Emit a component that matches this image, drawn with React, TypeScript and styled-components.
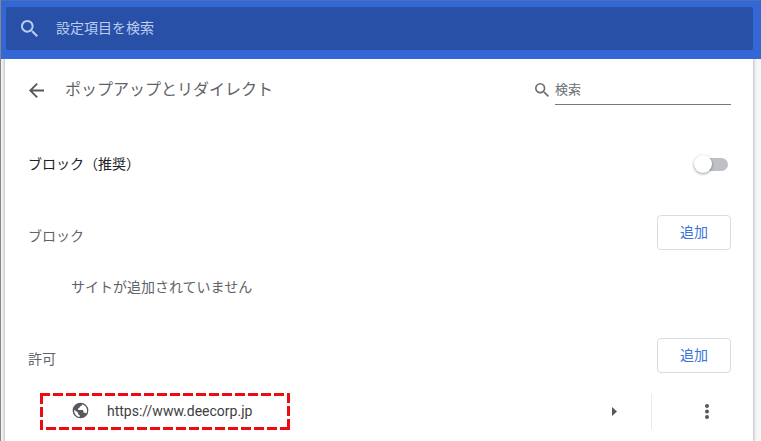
import React from "react";
import styled, { createGlobalStyle } from "styled-components";

const GlobalStyle = createGlobalStyle`
  * { box-sizing: border-box; }
  body {
    margin: 0;
    background: #f6f7f8;
    color: #333639;
    font-family: Roboto, "Noto Sans CJK JP", sans-serif;
    font-size: 14px;
    line-height: 20px;
  }
  button, input { font: inherit; }
`;

const Page = styled.div`
  min-height: 100vh;
  display: flex;
  flex-direction: column;
  border-left: 1px solid #85878b;
  overflow: hidden;
`;

const Header = styled.header`
  padding: 6px 8px 9px 5px;
  background: #3367d6;
  border-top: 1px solid #4a6fb8;
`;

const HeaderSearch = styled.label`
  display: flex;
  align-items: center;
  gap: 18px;
  height: 43px;
  padding: 0 15px;
  border-radius: 2px;
  background: #2850a7;
  color: #bccdf0;
`;

const HeaderInput = styled.input`
  flex: 1;
  min-width: 0;
  padding: 0 0 1px;
  border: 0;
  outline: 0;
  background: transparent;
  color: #fff;
  &::placeholder { color: #bccdf0; opacity: 1; }
`;

const Card = styled.main`
  flex: 1;
  margin: 0 8px 0 4px;
  padding: 0 22px 0 23px;
  background: #fff;
  box-shadow: 0 0 3px 1px rgba(60, 64, 67, 0.32);
  clip-path: inset(0 -8px 0 -4px);
`;

const TitleRow = styled.div`
  display: flex;
  align-items: center;
  height: 62px;
`;

const IconButton = styled.button`
  display: flex;
  align-items: center;
  justify-content: center;
  padding: 0;
  border: 0;
  background: transparent;
  color: #55585c;
  cursor: pointer;
`;

const BackButton = styled(IconButton)`
  width: 17px;
  height: 24px;
`;

const Title = styled.h1`
  flex: 1;
  margin: 0 0 0 20px;
  color: #5f6368;
  font-size: 16px;
  line-height: 24px;
  font-weight: 400;
`;

const SiteSearch = styled.label`
  display: flex;
  align-items: center;
  gap: 6px;
  color: #6b6e72;
`;

const SiteInput = styled.input`
  width: 176px;
  height: 29px;
  padding: 0 0 1px;
  border: 0;
  border-bottom: 1px solid #77797d;
  border-radius: 0;
  outline: 0;
  background: transparent;
  font-size: 13px;
  &::placeholder { color: #6b6e72; opacity: 1; }
`;

const ToggleRow = styled.label`
  display: flex;
  align-items: center;
  justify-content: space-between;
  height: 86px;
  padding-right: 3px;
  color: #202124;
`;

const Toggle = styled.input`
  appearance: none;
  display: flex;
  align-items: center;
  width: 32px;
  height: 13px;
  margin: 0;
  border-radius: 7px;
  background: #bdc1c6;
  &::before {
    content: "";
    width: 18px;
    height: 18px;
    margin-left: -2px;
    border-radius: 50%;
    background: #fff;
    box-shadow: 0 1px 3px rgba(0, 0, 0, 0.4);
  }
  &:checked { justify-content: flex-end; background: #8ab4f8; }
`;

const Section = styled.section`
  padding-top: 8px;
`;

const SectionHeader = styled.div`
  display: flex;
  align-items: center;
  justify-content: space-between;
`;

const SectionTitle = styled.h2`
  margin: 0;
  padding-top: 6px;
  color: #5f6368;
  font-size: 14px;
  font-weight: 400;
`;

const AddButton = styled.button`
  width: 74px;
  height: 35px;
  padding: 0 0 2px;
  border: 1px solid #dadce0;
  border-radius: 4px;
  background: #fff;
  color: #3a71dc;
  cursor: pointer;
`;

const EmptyNote = styled.p`
  margin: 0;
  padding: 27px 43px 33px;
  color: #5f6368;
`;

const SiteRow = styled.div`
  display: flex;
  align-items: center;
  margin: 20px 0 0 12px;
  height: 37px;
`;

const SiteLink = styled.a`
  position: relative;
  display: flex;
  align-items: center;
  gap: 18px;
  width: 250px;
  height: 37px;
  padding: 0 0 2px 32px;
  color: #3c4043;
  text-decoration: none;
`;

const Highlight = styled.svg`
  position: absolute;
  inset: 0;
  width: 100%;
  height: 100%;
`;

const DetailsButton = styled(IconButton)`
  width: 20px;
  height: 35px;
  margin: 0 27px 0 auto;
`;

const MenuCell = styled.div`
  display: flex;
  justify-content: center;
  width: 80px;
  padding-left: 31px;
  border-left: 1px solid #e8eaed;
`;

const MenuButton = styled(IconButton)`
  width: 24px;
  height: 35px;
`;

const SearchIcon = ({ size }: { size: number }) => (
  <svg width={size} height={size} viewBox="3 3 17.5 17.5" fill="currentColor" aria-hidden="true">
    <path d="M15.5 14h-.79l-.28-.27A6.47 6.47 0 0 0 16 9.5 6.5 6.5 0 1 0 9.5 16c1.61 0 3.09-.59 4.23-1.57l.27.28v.79l5 4.99L20.49 19l-4.99-5zm-6 0C7.01 14 5 11.99 5 9.5S7.01 5 9.5 5 14 7.01 14 9.5 11.99 14 9.5 14z" />
  </svg>
);

const BackIcon = () => (
  <svg width="15" height="15" viewBox="4 4 16 16" fill="currentColor" aria-hidden="true">
    <path d="M20 11H7.83l5.59-5.59L12 4l-8 8 8 8 1.41-1.41L7.83 13H20v-2z" />
  </svg>
);

const GlobeIcon = () => (
  <svg width="17" height="17" viewBox="0 0 16 16" aria-hidden="true">
    <circle cx="8" cy="8" r="7.4" fill="#55585c" />
    <path
      d="M9.5 2.2c-.2 1.5-.8 1.9-2.1 2-.2 1.1-.6 1.6-1.6 1.7v1.6h3.6c1 0 1.4.6 1.4 1.5v1h1.3c.8 0 1.2.3 1.5.9.4-.9.6-1.9.6-2.9 0-2.6-1.9-5-4.7-5.8zM2.1 7.2C1.6 10.6 4 13.7 7.3 14v-1.6c-.9 0-1.5-.6-1.5-1.5v-.8z"
      fill="#fff"
    />
  </svg>
);

export default function App() {
  return (
    <>
      <GlobalStyle />
      <Page>
        <Header>
          <HeaderSearch>
            <SearchIcon size={17} />
            <HeaderInput type="search" placeholder="設定項目を検索" aria-label="設定項目を検索" />
          </HeaderSearch>
        </Header>
        <Card>
          <TitleRow>
            <BackButton aria-label="戻る">
              <BackIcon />
            </BackButton>
            <Title>ポップアップとリダイレクト</Title>
            <SiteSearch>
              <SearchIcon size={14} />
              <SiteInput type="search" placeholder="検索" aria-label="検索" />
            </SiteSearch>
          </TitleRow>
          <ToggleRow>
            ブロック（推奨）
            <Toggle type="checkbox" role="switch" />
          </ToggleRow>
          <Section>
            <SectionHeader>
              <SectionTitle>ブロック</SectionTitle>
              <AddButton>追加</AddButton>
            </SectionHeader>
            <EmptyNote>サイトが追加されていません</EmptyNote>
          </Section>
          <Section>
            <SectionHeader>
              <SectionTitle>許可</SectionTitle>
              <AddButton>追加</AddButton>
            </SectionHeader>
            <SiteRow>
              <SiteLink href="https://www.deecorp.jp">
                <Highlight aria-hidden="true">
                  <g stroke="#ee0a0e" strokeWidth="3" strokeDasharray="10 3">
                    <line x1="0" y1="1.5" x2="250" y2="1.5" />
                    <line x1="248.5" y1="0" x2="248.5" y2="37" />
                    <line x1="250" y1="35.5" x2="0" y2="35.5" />
                    <line x1="1.5" y1="37" x2="1.5" y2="0" />
                  </g>
                </Highlight>
                <GlobeIcon />
                https://www.deecorp.jp
              </SiteLink>
              <DetailsButton aria-label="サイトの詳細">
                <svg width="5" height="9" viewBox="0 0 5 9" fill="currentColor" aria-hidden="true">
                  <path d="M0 0l5 4.5L0 9z" />
                </svg>
              </DetailsButton>
              <MenuCell>
                <MenuButton aria-label="その他の操作">
                  <svg width="4" height="15" viewBox="0 0 4 15" fill="currentColor" aria-hidden="true">
                    <circle cx="2" cy="2" r="2" />
                    <circle cx="2" cy="7.5" r="2" />
                    <circle cx="2" cy="13" r="2" />
                  </svg>
                </MenuButton>
              </MenuCell>
            </SiteRow>
          </Section>
        </Card>
      </Page>
    </>
  );
}
